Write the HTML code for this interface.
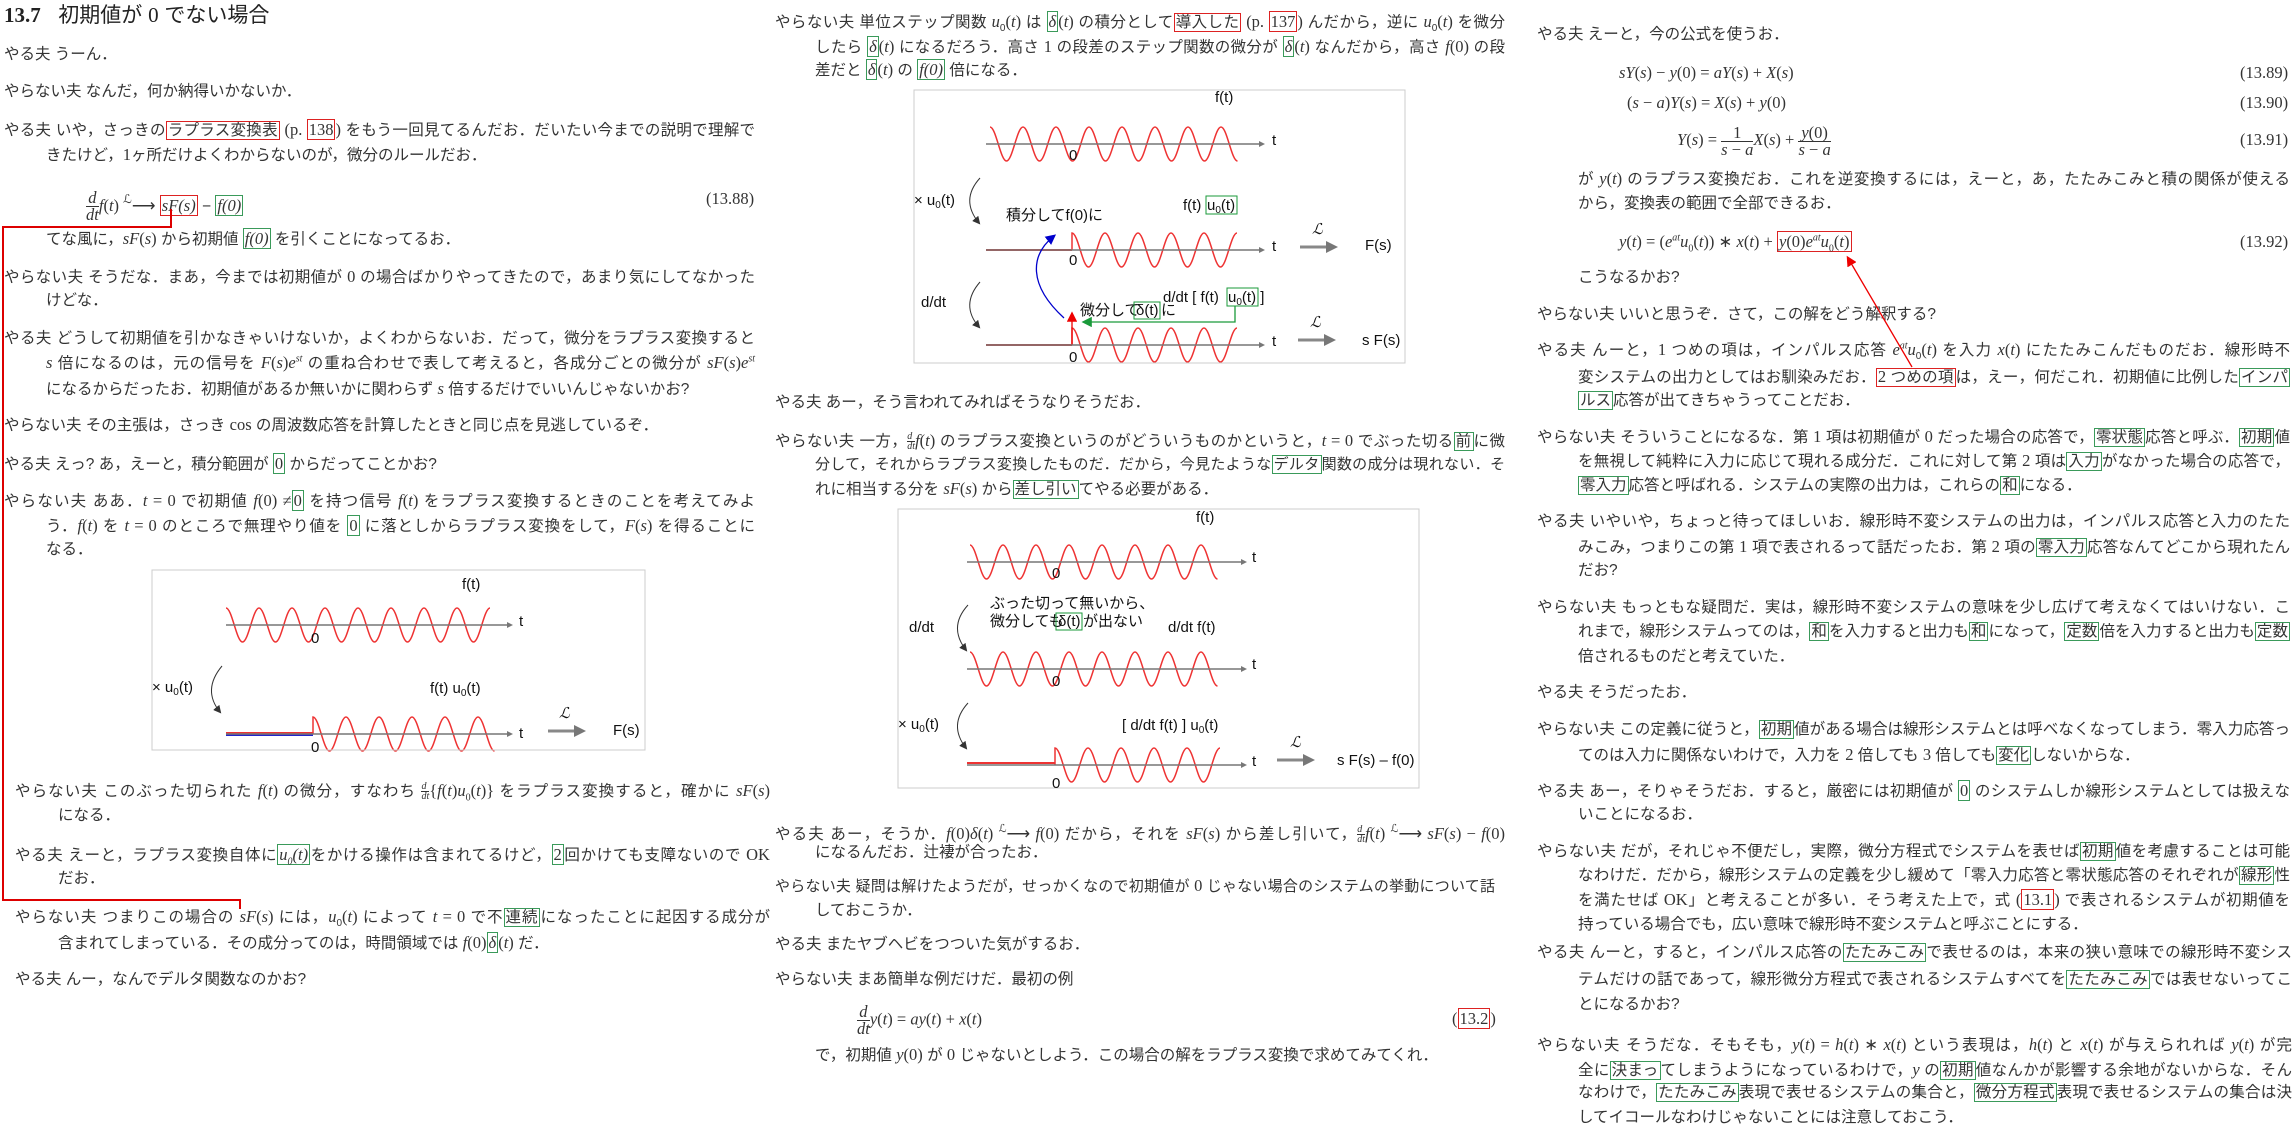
<!DOCTYPE html>
<html><head><meta charset="utf-8">
<style>
body{margin:0;width:2292px;height:1125px;background:#fff;position:relative;overflow:hidden}
.l{position:absolute;white-space:nowrap;font:15.5px/20px "Liberation Sans","Noto Sans CJK JP",sans-serif;color:#333}
.j{white-space:normal;text-align:justify;text-align-last:justify;height:20px}
.m{font-family:"Liberation Serif",serif;font-style:italic;font-size:16.5px}
.n{font-family:"Liberation Serif",serif;font-size:16.5px}
.g{border:1px solid #3a9a5a;padding:0 1px}
.r{border:1.5px solid #d22;padding:0 1px}
sub,sup{font-size:10px;line-height:0}
.fr{display:inline-block;vertical-align:middle;text-align:center;font-family:"Liberation Serif",serif;line-height:16px}
.fr span{display:block}
.fr span:first-child{border-bottom:1px solid #333}
.sf{display:inline-block;vertical-align:middle;text-align:center;font-family:"Liberation Serif",serif;font-style:italic;font-size:10px;line-height:9px}
.sf span{display:block}
.sf span:first-child{border-bottom:1px solid #333}
svg text{font-family:"Liberation Sans","Noto Sans CJK JP",sans-serif;font-size:15px;fill:#111}
</style></head><body>

<!-- COLUMN 1 -->
<div class="l" style="left:4px;top:3px;font-size:21px;line-height:24px;color:#222"><span style="font-family:'Liberation Serif';font-weight:bold">13.7</span>&nbsp;&nbsp;&nbsp;初期値が <span style="font-family:'Liberation Serif'">0</span> でない場合</div>
<div class="l" style="left:4px;top:45px">やる夫 うーん．</div>
<div class="l" style="left:4px;top:82px">やらない夫 なんだ，何か納得いかないか．</div>
<div class="l j" style="left:4px;top:120px;width:751px">やる夫 いや，さっきの<span class="r">ラプラス変換表</span> <span class="n">(p. <span class="r">138</span>)</span> をもう一回見てるんだお．だいたい今までの説明で理解で</div>
<div class="l" style="left:46px;top:145px">きたけど，<span class="n">1</span>ヶ所だけよくわからないのが，微分のルールだお．</div>
<div class="l" style="left:86px;top:184px;line-height:30px"><span class="fr"><span class="m">d</span><span class="m">dt</span></span><span class="m">f</span><span class="n">(</span><span class="m">t</span><span class="n">) <span style="font-size:12px;vertical-align:8px">ℒ</span>⟶</span> <span class="r m">sF(s)</span> − <span class="g m">f(0)</span></div>
<div class="l n" style="left:706px;top:189px">(13.88)</div>
<div class="l" style="left:46px;top:229px">てな風に，<span class="m">sF</span><span class="n">(<i>s</i>)</span> から初期値 <span class="g m">f(0)</span> を引くことになってるお．</div>
<div class="l j" style="left:4px;top:267px;width:751px">やらない夫 そうだな．まあ，今までは初期値が <span class="n">0</span> の場合ばかりやってきたので，あまり気にしてなかった</div>
<div class="l" style="left:46px;top:291px">けどな．</div>
<div class="l j" style="left:4px;top:329px;width:751px">やる夫 どうして初期値を引かなきゃいけないか，よくわからないお．だって，微分をラプラス変換すると</div>
<div class="l j" style="left:46px;top:353px;width:709px"><span class="m">s</span> 倍になるのは，元の信号を <span class="m">F</span><span class="n">(<i>s</i>)<i>e<sup>st</sup></i></span> の重ね合わせで表して考えると，各成分ごとの微分が <span class="m">sF</span><span class="n">(<i>s</i>)<i>e<sup>st</sup></i></span></div>
<div class="l" style="left:46px;top:379px">になるからだったお．初期値があるか無いかに関わらず <span class="m">s</span> 倍するだけでいいんじゃないかお?</div>
<div class="l" style="left:4px;top:415px">やらない夫 その主張は，さっき <span class="n">cos</span> の周波数応答を計算したときと同じ点を見逃しているぞ．</div>
<div class="l" style="left:4px;top:454px">やる夫 えっ? あ，えーと，積分範囲が <span class="g n">0</span> からだってことかお?</div>
<div class="l j" style="left:4px;top:491px;width:751px">やらない夫 ああ．<span class="m">t</span> <span class="n">= 0</span> で初期値 <span class="m">f</span><span class="n">(0) ≠</span><span class="g n">0</span> を持つ信号 <span class="m">f</span><span class="n">(<i>t</i>)</span> をラプラス変換するときのことを考えてみよ</div>
<div class="l j" style="left:46px;top:516px;width:709px">う．<span class="m">f</span><span class="n">(<i>t</i>)</span> を <span class="m">t</span> <span class="n">= 0</span> のところで無理やり値を <span class="g n">0</span> に落としからラプラス変換をして，<span class="m">F</span><span class="n">(<i>s</i>)</span> を得ることに</div>
<div class="l" style="left:46px;top:540px">なる．</div>
<div class="l j" style="left:15px;top:781px;width:755px">やらない夫 このぶった切られた <span class="m">f</span><span class="n">(<i>t</i>)</span> の微分，すなわち <span class="sf"><span>d</span><span>dt</span></span><span class="n">{<i>f</i>(<i>t</i>)<i>u</i><sub>0</sub>(<i>t</i>)}</span> をラプラス変換すると，確かに <span class="m">sF</span><span class="n">(<i>s</i>)</span></div>
<div class="l" style="left:58px;top:806px">になる．</div>
<div class="l j" style="left:15px;top:845px;width:755px">やる夫 えーと，ラプラス変換自体に<span class="g m">u<sub>0</sub>(t)</span>をかける操作は含まれてるけど，<span class="g n">2</span>回かけても支障ないので <span class="n">OK</span></div>
<div class="l" style="left:58px;top:869px">だお．</div>
<div class="l j" style="left:15px;top:907px;width:755px">やらない夫 つまりこの場合の <span class="m">sF</span><span class="n">(<i>s</i>)</span> には，<span class="m">u</span><sub>0</sub><span class="n">(<i>t</i>)</span> によって <span class="m">t</span> <span class="n">= 0</span> で不<span class="g">連続</span>になったことに起因する成分が</div>
<div class="l" style="left:58px;top:933px">含まれてしまっている．その成分ってのは，時間領域では <span class="m">f</span><span class="n">(0)</span><span class="g m">δ</span><span class="n">(<i>t</i>)</span> だ．</div>
<div class="l" style="left:15px;top:970px">やる夫 んー，なんでデルタ関数なのかお?</div>

<!-- COLUMN 2 -->
<div class="l j" style="left:775px;top:12px;width:730px">やらない夫 単位ステップ関数 <span class="m">u</span><sub>0</sub><span class="n">(<i>t</i>)</span> は <span class="g m">δ</span><span class="n">(<i>t</i>)</span> の積分として<span class="r">導入した</span> <span class="n">(p. <span class="r">137</span>)</span> んだから，逆に <span class="m">u</span><sub>0</sub><span class="n">(<i>t</i>)</span> を微分</div>
<div class="l j" style="left:815px;top:37px;width:690px">したら <span class="g m">δ</span><span class="n">(<i>t</i>)</span> になるだろう．高さ <span class="n">1</span> の段差のステップ関数の微分が <span class="g m">δ</span><span class="n">(<i>t</i>)</span> なんだから，高さ <span class="m">f</span><span class="n">(0)</span> の段</div>
<div class="l" style="left:815px;top:60px">差だと <span class="g m">δ</span><span class="n">(<i>t</i>)</span> の <span class="g m">f(0)</span> 倍になる．</div>
<div class="l" style="left:775px;top:393px">やる夫 あー，そう言われてみればそうなりそうだお．</div>
<div class="l j" style="left:775px;top:431px;width:730px">やらない夫 一方，<span class="sf"><span>d</span><span>dt</span></span><span class="m">f</span><span class="n">(<i>t</i>)</span> のラプラス変換というのがどういうものかというと，<span class="m">t</span> <span class="n">= 0</span> でぶった切る<span class="g">前</span>に微</div>
<div class="l j" style="left:815px;top:455px;width:690px;font-size:15px">分して，それからラプラス変換したものだ．だから，今見たような<span class="g">デルタ</span>関数の成分は現れない．そ</div>
<div class="l" style="left:815px;top:479px">れに相当する分を <span class="m">sF</span><span class="n">(<i>s</i>)</span> から<span class="g">差し引い</span>てやる必要がある．</div>
<div class="l j" style="left:775px;top:819px;width:730px">やる夫 あー，そうか．<span class="m">f</span><span class="n">(0)<i>δ</i>(<i>t</i>) <span style="font-size:11px;vertical-align:7px">ℒ</span>⟶ <i>f</i>(0)</span> だから，それを <span class="m">sF</span><span class="n">(<i>s</i>)</span> から差し引いて，<span class="sf"><span>d</span><span>dt</span></span><span class="m">f</span><span class="n">(<i>t</i>) <span style="font-size:11px;vertical-align:7px">ℒ</span>⟶ <i>sF</i>(<i>s</i>) − <i>f</i>(0)</span></div>
<div class="l" style="left:815px;top:843px">になるんだお．辻褄が合ったお．</div>
<div class="l j" style="left:775px;top:876px;width:720px;font-size:15px">やらない夫 疑問は解けたようだが，せっかくなので初期値が <span class="n">0</span> じゃない場合のシステムの挙動について話</div>
<div class="l" style="left:815px;top:901px">しておこうか．</div>
<div class="l" style="left:775px;top:935px">やる夫 またヤブヘビをつついた気がするお．</div>
<div class="l" style="left:775px;top:970px">やらない夫 まあ簡単な例だけだ．最初の例</div>
<div class="l" style="left:857px;top:1004px;line-height:30px"><span class="fr"><span class="m">d</span><span class="m">dt</span></span><span class="m">y</span><span class="n">(<i>t</i>) = <i>ay</i>(<i>t</i>) + <i>x</i>(<i>t</i>)</span></div>
<div class="l n" style="left:1452px;top:1009px">(<span class="r">13.2</span>)</div>
<div class="l" style="left:815px;top:1045px">で，初期値 <span class="m">y</span><span class="n">(0)</span> が <span class="n">0</span> じゃないとしよう．この場合の解をラプラス変換で求めてみてくれ．</div>

<!-- COLUMN 3 -->
<div class="l" style="left:1537px;top:25px">やる夫 えーと，今の公式を使うお．</div>
<div class="l n" style="left:1619px;top:63px"><i>sY</i>(<i>s</i>) − <i>y</i>(0) = <i>aY</i>(<i>s</i>) + <i>X</i>(<i>s</i>)</div>
<div class="l n" style="left:2240px;top:63px">(13.89)</div>
<div class="l n" style="left:1627px;top:93px">(<i>s</i> − <i>a</i>)<i>Y</i>(<i>s</i>) = <i>X</i>(<i>s</i>) + <i>y</i>(0)</div>
<div class="l n" style="left:2240px;top:93px">(13.90)</div>
<div class="l n" style="left:1677px;top:122px;line-height:36px"><i>Y</i>(<i>s</i>) = <span class="fr"><span>1</span><span><i>s</i> − <i>a</i></span></span><i>X</i>(<i>s</i>) + <span class="fr"><span><i>y</i>(0)</span><span><i>s</i> − <i>a</i></span></span></div>
<div class="l n" style="left:2240px;top:130px">(13.91)</div>
<div class="l j" style="left:1578px;top:169px;width:712px">が <span class="m">y</span><span class="n">(<i>t</i>)</span> のラプラス変換だお．これを逆変換するには，えーと，あ，たたみこみと積の関係が使える</div>
<div class="l" style="left:1578px;top:194px">から，変換表の範囲で全部できるお．</div>
<div class="l n" style="left:1619px;top:232px"><i>y</i>(<i>t</i>) = (<i>e<sup>at</sup>u</i><sub>0</sub>(<i>t</i>)) ∗ <i>x</i>(<i>t</i>) + <span class="r"><i>y</i>(0)<i>e<sup>at</sup>u</i><sub>0</sub>(<i>t</i>)</span></div>
<div class="l n" style="left:2240px;top:232px">(13.92)</div>
<div class="l" style="left:1578px;top:268px">こうなるかお?</div>
<div class="l" style="left:1537px;top:305px">やらない夫 いいと思うぞ．さて，この解をどう解釈する?</div>
<div class="l j" style="left:1537px;top:340px;width:753px">やる夫 んーと，<span class="n">1</span> つめの項は，インパルス応答 <span class="m">e<sup>at</sup>u</span><sub>0</sub><span class="n">(<i>t</i>)</span> を入力 <span class="m">x</span><span class="n">(<i>t</i>)</span> にたたみこんだものだお．線形時不</div>
<div class="l j" style="left:1578px;top:367px;width:712px">変システムの出力としてはお馴染みだお．<span class="r"><span class="n">2</span> つめの項</span>は，えー，何だこれ．初期値に比例した<span class="g">インパ</span></div>
<div class="l" style="left:1578px;top:391px"><span class="g">ルス</span>応答が出てきちゃうってことだお．</div>
<div class="l j" style="left:1537px;top:427px;width:753px">やらない夫 そういうことになるな．第 <span class="n">1</span> 項は初期値が <span class="n">0</span> だった場合の応答で，<span class="g">零状態</span>応答と呼ぶ．<span class="g">初期</span>値</div>
<div class="l j" style="left:1578px;top:451px;width:712px">を無視して純粋に入力に応じて現れる成分だ．これに対して第 <span class="n">2</span> 項は<span class="g">入力</span>がなかった場合の応答で，</div>
<div class="l" style="left:1578px;top:476px"><span class="g">零入力</span>応答と呼ばれる．システムの実際の出力は，これらの<span class="g">和</span>になる．</div>
<div class="l j" style="left:1537px;top:512px;width:753px">やる夫 いやいや，ちょっと待ってほしいお．線形時不変システムの出力は，インパルス応答と入力のたた</div>
<div class="l j" style="left:1578px;top:537px;width:712px">みこみ，つまりこの第 <span class="n">1</span> 項で表されるって話だったお．第 <span class="n">2</span> 項の<span class="g">零入力</span>応答なんてどこから現れたん</div>
<div class="l" style="left:1578px;top:561px">だお?</div>
<div class="l j" style="left:1537px;top:598px;width:753px">やらない夫 もっともな疑問だ．実は，線形時不変システムの意味を少し広げて考えなくてはいけない．こ</div>
<div class="l j" style="left:1578px;top:622px;width:712px">れまで，線形システムってのは，<span class="g">和</span>を入力すると出力も<span class="g">和</span>になって，<span class="g">定数</span>倍を入力すると出力も<span class="g">定数</span></div>
<div class="l" style="left:1578px;top:647px">倍されるものだと考えていた．</div>
<div class="l" style="left:1537px;top:683px">やる夫 そうだったお．</div>
<div class="l j" style="left:1537px;top:720px;width:753px">やらない夫 この定義に従うと，<span class="g">初期</span>値がある場合は線形システムとは呼べなくなってしまう．零入力応答っ</div>
<div class="l" style="left:1578px;top:745px">てのは入力に関係ないわけで，入力を <span class="n">2</span> 倍しても <span class="n">3</span> 倍しても<span class="g">変化</span>しないからな．</div>
<div class="l j" style="left:1537px;top:781px;width:753px">やる夫 あー，そりゃそうだお．すると，厳密には初期値が <span class="g n">0</span> のシステムしか線形システムとしては扱えな</div>
<div class="l" style="left:1578px;top:805px">いことになるお．</div>
<div class="l j" style="left:1537px;top:842px;width:753px">やらない夫 だが，それじゃ不便だし，実際，微分方程式でシステムを表せば<span class="g">初期</span>値を考慮することは可能</div>
<div class="l j" style="left:1578px;top:866px;width:712px">なわけだ．だから，線形システムの定義を少し緩めて「零入力応答と零状態応答のそれぞれが<span class="g">線形</span>性</div>
<div class="l j" style="left:1578px;top:890px;width:712px">を満たせば <span class="n">OK</span>」と考えることが多い．そう考えた上で，式 <span class="n">(<span class="r">13.1</span>)</span> で表されるシステムが初期値を</div>
<div class="l" style="left:1578px;top:915px">持っている場合でも，広い意味で線形時不変システムと呼ぶことにする．</div>
<div class="l j" style="left:1537px;top:943px;width:755px">やる夫 んーと，すると，インパルス応答の<span class="g">たたみこみ</span>で表せるのは，本来の狭い意味での線形時不変シス</div>
<div class="l j" style="left:1578px;top:970px;width:714px">テムだけの話であって，線形微分方程式で表されるシステムすべてを<span class="g">たたみこみ</span>では表せないってこ</div>
<div class="l" style="left:1578px;top:995px">とになるかお?</div>
<div class="l j" style="left:1537px;top:1035px;width:755px">やらない夫 そうだな．そもそも，<span class="m">y</span><span class="n">(<i>t</i>) = <i>h</i>(<i>t</i>) ∗ <i>x</i>(<i>t</i>)</span> という表現は，<span class="m">h</span><span class="n">(<i>t</i>)</span> と <span class="m">x</span><span class="n">(<i>t</i>)</span> が与えられれば <span class="m">y</span><span class="n">(<i>t</i>)</span> が完</div>
<div class="l j" style="left:1578px;top:1060px;width:714px">全に<span class="g">決まっ</span>てしまうようになっているわけで，<span class="m">y</span> の<span class="g">初期</span>値なんかが影響する余地がないからな．そん</div>
<div class="l j" style="left:1578px;top:1083px;width:714px">なわけで，<span class="g">たたみこみ</span>表現で表せるシステムの集合と，<span class="g">微分方程式</span>表現で表せるシステムの集合は決</div>
<div class="l" style="left:1578px;top:1108px">してイコールなわけじゃないことには注意しておこう．</div>

<svg width="2292" height="1125" style="position:absolute;left:0;top:0" xmlns="http://www.w3.org/2000/svg">
<defs>
<marker id="ah" markerWidth="8" markerHeight="8" refX="6" refY="4" orient="auto"><path d="M0,0 L8,4 L0,8 z" fill="#333"/></marker>
<marker id="ab" markerWidth="8" markerHeight="8" refX="6" refY="4" orient="auto"><path d="M0,0 L8,4 L0,8 z" fill="#0000cc"/></marker>
<marker id="ag" markerWidth="8" markerHeight="8" refX="6" refY="4" orient="auto"><path d="M0,0 L8,4 L0,8 z" fill="#1a9a3a"/></marker>
<marker id="ar" markerWidth="8" markerHeight="8" refX="6" refY="4" orient="auto"><path d="M0,0 L8,4 L0,8 z" fill="#e00"/></marker>
<marker id="gh" markerWidth="4" markerHeight="4" refX="2" refY="2" orient="auto"><path d="M0,0 L4,2 L0,4 z" fill="#777"/></marker>
</defs>
<g fill="none" stroke="#e33" stroke-width="1.5">
<path d="M226,608 c6,0 10.5,34 16.5,34 c6,0 10.5,-34 16.5,-34 c6,0 10.5,34 16.5,34 c6,0 10.5,-34 16.5,-34 c6,0 10.5,34 16.5,34 c6,0 10.5,-34 16.5,-34 c6,0 10.5,34 16.5,34 c6,0 10.5,-34 16.5,-34 c6,0 10.5,34 16.5,34 c6,0 10.5,-34 16.5,-34 c6,0 10.5,34 16.5,34 c6,0 10.5,-34 16.5,-34 c6,0 10.5,34 16.5,34 c6,0 10.5,-34 16.5,-34 c6,0 10.5,34 16.5,34 c6,0 10.5,-34 16.5,-34"/>
<path d="M313,734 L313,717 c6,0 10.5,34 16.5,34 c6,0 10.5,-34 16.5,-34 c6,0 10.5,34 16.5,34 c6,0 10.5,-34 16.5,-34 c6,0 10.5,34 16.5,34 c6,0 10.5,-34 16.5,-34 c6,0 10.5,34 16.5,34 c6,0 10.5,-34 16.5,-34 c6,0 10.5,34 16.5,34 c6,0 10.5,-34 16.5,-34 c6,0 10.5,34 16.5,34"/>
<path d="M990,127 c6,0 10.5,34 16.5,34 c6,0 10.5,-34 16.5,-34 c6,0 10.5,34 16.5,34 c6,0 10.5,-34 16.5,-34 c6,0 10.5,34 16.5,34 c6,0 10.5,-34 16.5,-34 c6,0 10.5,34 16.5,34 c6,0 10.5,-34 16.5,-34 c6,0 10.5,34 16.5,34 c6,0 10.5,-34 16.5,-34 c6,0 10.5,34 16.5,34 c6,0 10.5,-34 16.5,-34 c6,0 10.5,34 16.5,34 c6,0 10.5,-34 16.5,-34 c6,0 10.5,34 16.5,34"/>
<path d="M1072,250 L1072,233 c6,0 10.5,34 16.5,34 c6,0 10.5,-34 16.5,-34 c6,0 10.5,34 16.5,34 c6,0 10.5,-34 16.5,-34 c6,0 10.5,34 16.5,34 c6,0 10.5,-34 16.5,-34 c6,0 10.5,34 16.5,34 c6,0 10.5,-34 16.5,-34 c6,0 10.5,34 16.5,34 c6,0 10.5,-34 16.5,-34"/>
<path d="M1072,345 L1072,328 c6,0 10.5,34 16.5,34 c6,0 10.5,-34 16.5,-34 c6,0 10.5,34 16.5,34 c6,0 10.5,-34 16.5,-34 c6,0 10.5,34 16.5,34 c6,0 10.5,-34 16.5,-34 c6,0 10.5,34 16.5,34 c6,0 10.5,-34 16.5,-34 c6,0 10.5,34 16.5,34 c6,0 10.5,-34 16.5,-34"/>
<path d="M970,545 c6,0 10.5,34 16.5,34 c6,0 10.5,-34 16.5,-34 c6,0 10.5,34 16.5,34 c6,0 10.5,-34 16.5,-34 c6,0 10.5,34 16.5,34 c6,0 10.5,-34 16.5,-34 c6,0 10.5,34 16.5,34 c6,0 10.5,-34 16.5,-34 c6,0 10.5,34 16.5,34 c6,0 10.5,-34 16.5,-34 c6,0 10.5,34 16.5,34 c6,0 10.5,-34 16.5,-34 c6,0 10.5,34 16.5,34 c6,0 10.5,-34 16.5,-34 c6,0 10.5,34 16.5,34"/>
<path d="M970,652 c6,0 10.5,34 16.5,34 c6,0 10.5,-34 16.5,-34 c6,0 10.5,34 16.5,34 c6,0 10.5,-34 16.5,-34 c6,0 10.5,34 16.5,34 c6,0 10.5,-34 16.5,-34 c6,0 10.5,34 16.5,34 c6,0 10.5,-34 16.5,-34 c6,0 10.5,34 16.5,34 c6,0 10.5,-34 16.5,-34 c6,0 10.5,34 16.5,34 c6,0 10.5,-34 16.5,-34 c6,0 10.5,34 16.5,34 c6,0 10.5,-34 16.5,-34 c6,0 10.5,34 16.5,34"/>
<path d="M1055,765 L1055,748 c6,0 10.5,34 16.5,34 c6,0 10.5,-34 16.5,-34 c6,0 10.5,34 16.5,34 c6,0 10.5,-34 16.5,-34 c6,0 10.5,34 16.5,34 c6,0 10.5,-34 16.5,-34 c6,0 10.5,34 16.5,34 c6,0 10.5,-34 16.5,-34 c6,0 10.5,34 16.5,34 c6,0 10.5,-34 16.5,-34"/>
</g>
<polyline points="171,209 171,227 3,227 3,900 240,900 240,909" fill="none" stroke="#d00" stroke-width="2"/>
<line x1="1912" y1="367" x2="1848" y2="258" stroke="#e00" stroke-width="1.3" marker-end="url(#ar)"/>

<rect x="152" y="570" width="493" height="180" fill="none" stroke="#ccc"/>
<text x="462" y="589">f(t)</text>
<line x1="226" y1="625" x2="510" y2="625" stroke="#777" stroke-width="1.5" marker-end="url(#gh)"/>
<text x="311" y="643">0</text><text x="519" y="626">t</text>
<text x="152" y="692">× u<tspan font-size="10" dy="3">0</tspan><tspan dy="-3">(t)</tspan></text>
<path d="M222,666 Q202,690 220,712" fill="none" stroke="#333" marker-end="url(#ah)"/>
<text x="430" y="693">f(t) u<tspan font-size="10" dy="3">0</tspan><tspan dy="-3">(t)</tspan></text>
<line x1="226" y1="735" x2="313" y2="735" stroke="#22c" stroke-width="2"/>
<line x1="226" y1="733" x2="313" y2="733" stroke="#e33" stroke-width="2"/>
<line x1="226" y1="734" x2="510" y2="734" stroke="#777" stroke-width="1.5" marker-end="url(#gh)"/>
<text x="311" y="752">0</text><text x="519" y="738">t</text>
<line x1="548" y1="731" x2="580" y2="731" stroke="#888" stroke-width="3" marker-end="url(#gh)"/>
<text x="559" y="718" font-style="italic">ℒ</text>
<text x="613" y="735">F(s)</text>

<rect x="914" y="90" width="491" height="273" fill="none" stroke="#ccc"/>
<text x="1215" y="102">f(t)</text>
<line x1="986" y1="144" x2="1262" y2="144" stroke="#777" stroke-width="1.5" marker-end="url(#gh)"/>
<text x="1069" y="160">0</text><text x="1272" y="145">t</text>
<text x="914" y="205">× u<tspan font-size="10" dy="3">0</tspan><tspan dy="-3">(t)</tspan></text>
<path d="M980,178 Q960,200 979,223" fill="none" stroke="#333" marker-end="url(#ah)"/>
<text x="1183" y="210">f(t)</text><rect x="1206" y="196" width="31" height="18" fill="none" stroke="#1a9a3a"/><text x="1207" y="210">u<tspan font-size="10" dy="3">0</tspan><tspan dy="-3">(t)</tspan></text>
<text x="1006" y="220" font-size="13">積分してf(0)に</text>
<line x1="986" y1="250" x2="1072" y2="250" stroke="#e33" stroke-width="2"/>
<line x1="986" y1="250" x2="1262" y2="250" stroke="#777" stroke-width="1.5" marker-end="url(#gh)"/>
<text x="1069" y="265">0</text><text x="1272" y="251">t</text>
<line x1="1300" y1="247" x2="1332" y2="247" stroke="#888" stroke-width="3" marker-end="url(#gh)"/>
<text x="1312" y="234" font-style="italic">ℒ</text><text x="1365" y="250">F(s)</text>
<text x="921" y="307">d/dt</text>
<path d="M980,282 Q960,305 979,327" fill="none" stroke="#333" marker-end="url(#ah)"/>
<text x="1163" y="302">d/dt [ f(t)</text><rect x="1227" y="288" width="31" height="18" fill="none" stroke="#1a9a3a"/><text x="1228" y="302">u<tspan font-size="10" dy="3">0</tspan><tspan dy="-3">(t) ]</tspan></text>
<rect x="1078" y="302" width="100" height="17" fill="#fff"/>
<text x="1080" y="315" font-size="13">微分して</text><rect x="1134" y="302" width="26" height="17" fill="none" stroke="#1a9a3a"/><text x="1136" y="315" font-size="13">δ(t)</text><text x="1161" y="315" font-size="13">に</text>
<polyline points="1235,306 1235,322 1084,322" fill="none" stroke="#1a9a3a" stroke-width="1.3" marker-end="url(#ag)"/>
<line x1="986" y1="345" x2="1072" y2="345" stroke="#e33" stroke-width="2"/>
<line x1="1072" y1="345" x2="1072" y2="314" stroke="#e00" stroke-width="1.3" marker-end="url(#ar)"/>
<path d="M1064,318 C1028,285 1030,255 1054,236" fill="none" stroke="#0000cc" stroke-width="1.3" marker-end="url(#ab)"/>
<line x1="986" y1="345" x2="1262" y2="345" stroke="#777" stroke-width="1.5" marker-end="url(#gh)"/>
<text x="1069" y="362">0</text><text x="1272" y="346">t</text>
<line x1="1298" y1="340" x2="1330" y2="340" stroke="#888" stroke-width="3" marker-end="url(#gh)"/>
<text x="1310" y="327" font-style="italic">ℒ</text><text x="1362" y="345">s F(s)</text>

<rect x="898" y="509" width="521" height="279" fill="none" stroke="#ccc"/>
<text x="1196" y="522">f(t)</text>
<line x1="967" y1="562" x2="1244" y2="562" stroke="#777" stroke-width="1.5" marker-end="url(#gh)"/>
<text x="1052" y="578">0</text><text x="1252" y="562">t</text>
<text x="909" y="632">d/dt</text>
<path d="M968,605 Q948,627 966,650" fill="none" stroke="#333" marker-end="url(#ah)"/>
<text x="990" y="608" font-size="13">ぶった切って無いから、</text>
<text x="990" y="626" font-size="13">微分しても</text><rect x="1056" y="613" width="26" height="17" fill="none" stroke="#1a9a3a"/><text x="1058" y="626" font-size="13">δ(t)</text><text x="1083" y="626" font-size="13">が出ない</text>
<text x="1168" y="632">d/dt f(t)</text>
<line x1="967" y1="669" x2="1244" y2="669" stroke="#777" stroke-width="1.5" marker-end="url(#gh)"/>
<text x="1052" y="686">0</text><text x="1252" y="669">t</text>
<text x="898" y="729">× u<tspan font-size="10" dy="3">0</tspan><tspan dy="-3">(t)</tspan></text>
<path d="M968,703 Q948,725 966,748" fill="none" stroke="#333" marker-end="url(#ah)"/>
<text x="1122" y="730">[ d/dt f(t) ] u<tspan font-size="10" dy="3">0</tspan><tspan dy="-3">(t)</tspan></text>
<line x1="967" y1="763" x2="1055" y2="763" stroke="#e33" stroke-width="2"/>
<line x1="967" y1="765" x2="1244" y2="765" stroke="#777" stroke-width="1.5" marker-end="url(#gh)"/>
<text x="1052" y="788">0</text><text x="1252" y="766">t</text>
<line x1="1277" y1="760" x2="1309" y2="760" stroke="#888" stroke-width="3" marker-end="url(#gh)"/>
<text x="1290" y="747" font-style="italic">ℒ</text><text x="1337" y="765">s F(s) – f(0)</text>
</svg>
</body></html>
